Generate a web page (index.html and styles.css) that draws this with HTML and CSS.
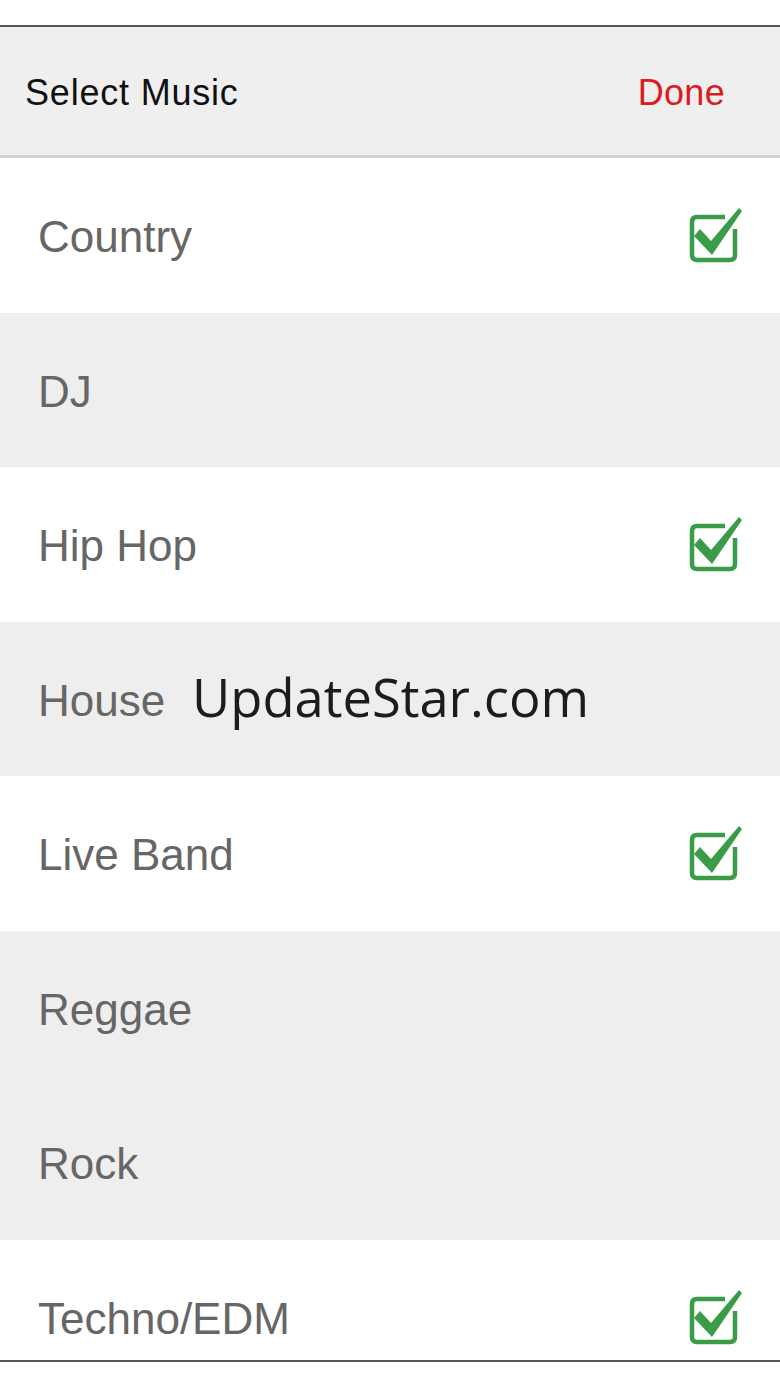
FILE: index.html
```html
<!DOCTYPE html>
<html>
<head>
<meta charset="utf-8">
<link rel="stylesheet" href="styles.css">
</head>
<body>
<div class="screen">
  <div class="top-gap"></div>
  <header class="bar">
    <span class="bar-title">Select Music</span>
    <span class="bar-done">Done</span>
  </header>
  <ul class="list">
    <li class="row row-white"><span class="label">Country</span>
      <svg class="check" viewBox="0 0 58 58" width="58" height="58"><path class="box" d="M39 10H11Q6 10 6 15V48Q6 53 11 53H44Q49 53 49 48V22"/><polygon class="tick" points="8,29 14,22 25,34 53,1 56,4 26,48"/></svg>
    </li>
    <li class="row row-grey"><span class="label">DJ</span></li>
    <li class="row row-white"><span class="label">Hip Hop</span>
      <svg class="check" viewBox="0 0 58 58" width="58" height="58"><path class="box" d="M39 10H11Q6 10 6 15V48Q6 53 11 53H44Q49 53 49 48V22"/><polygon class="tick" points="8,29 14,22 25,34 53,1 56,4 26,48"/></svg>
    </li>
    <li class="row row-grey"><span class="label">House</span></li>
    <li class="row row-white"><span class="label">Live Band</span>
      <svg class="check" viewBox="0 0 58 58" width="58" height="58"><path class="box" d="M39 10H11Q6 10 6 15V48Q6 53 11 53H44Q49 53 49 48V22"/><polygon class="tick" points="8,29 14,22 25,34 53,1 56,4 26,48"/></svg>
    </li>
    <li class="row row-grey"><span class="label">Reggae</span></li>
    <li class="row row-grey"><span class="label">Rock</span></li>
    <li class="row row-white"><span class="label">Techno/EDM</span>
      <svg class="check" viewBox="0 0 58 58" width="58" height="58"><path class="box" d="M39 10H11Q6 10 6 15V48Q6 53 11 53H44Q49 53 49 48V22"/><polygon class="tick" points="8,29 14,22 25,34 53,1 56,4 26,48"/></svg>
    </li>
  </ul>
  <div class="watermark">UpdateStar.com</div>
</div>
</body>
</html>
```

FILE: styles.css
```css
html, body {
  margin: 0;
  padding: 0;
  background: #ffffff;
}

.screen {
  position: relative;
  width: 780px;
  height: 1387px;
  overflow: hidden;
  background: #ffffff;
  font-family: "Liberation Sans", Arial, sans-serif;
}

.top-gap {
  height: 25px;
  border-bottom: 2px solid #555555;
  background: #ffffff;
}

.bar {
  height: 131px;
  background: #efefef;
  border-bottom: 3px solid #d2d2d2;
  display: flex;
  align-items: center;
  justify-content: space-between;
  padding: 4px 55px 0 25px;
  box-sizing: border-box;
}

.bar-title {
  font-size: 36px;
  color: #111111;
  letter-spacing: 0.8px;
}

.bar-done {
  font-size: 36px;
  color: #dc1a22;
  letter-spacing: 0.3px;
}

.list {
  list-style: none;
  margin: 0;
  padding: 0;
  height: 1202px;
  overflow: hidden;
  border-bottom: 2px solid #555555;
}

.row {
  height: 154.5px;
  display: flex;
  align-items: center;
  justify-content: space-between;
  padding: 0 36px 0 38px;
  box-sizing: border-box;
}

.row-white {
  background: #ffffff;
}

.row-grey {
  background: #eeeeee;
}

.label {
  font-size: 44px;
  color: #666666;
  margin-top: 4px;
}

.check {
  display: block;
  margin-top: 2px;
}

.check .box {
  fill: none;
  stroke: #3a9c48;
  stroke-width: 4.5;
}

.check .tick {
  fill: #3a9c48;
}

.watermark {
  position: absolute;
  left: 192px;
  top: 661px;
  font-family: "Open Sans", "Noto Sans", sans-serif;
  font-size: 52.5px;
  color: #1c1c1c;
  line-height: 72px;
}
```
